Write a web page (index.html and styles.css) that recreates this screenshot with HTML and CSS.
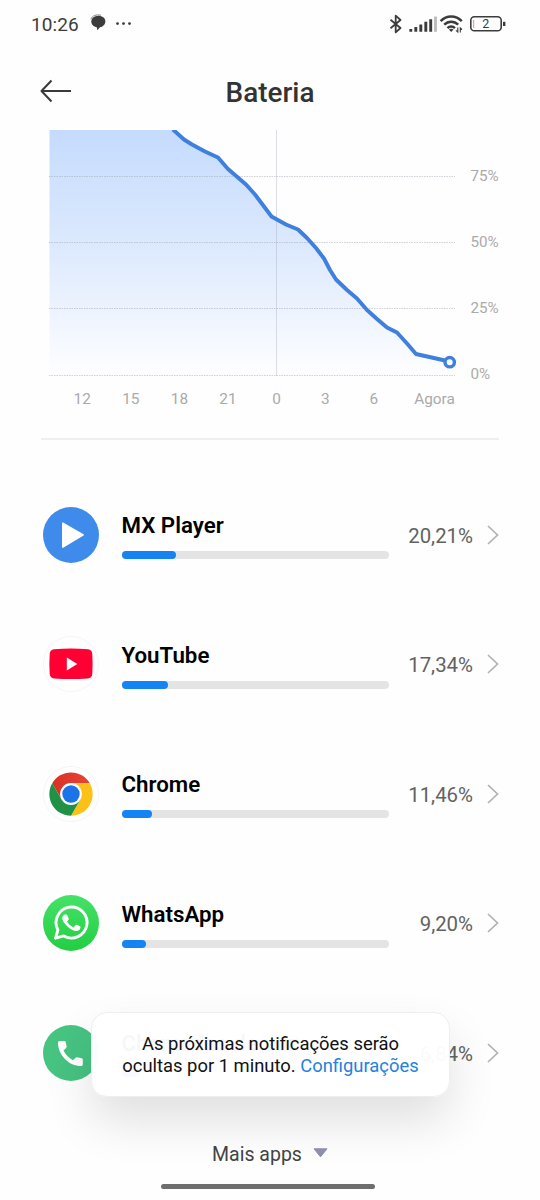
FILE: index.html
```
<!DOCTYPE html>
<html lang="pt-BR">
<head>
<meta charset="utf-8">
<title>Bateria</title>
<link rel="stylesheet" href="styles.css">
</head>
<body>
<div class="screen">
  <div class="status">
    <span class="clock">10:26</span>
    <svg class="notices" width="46" height="20" viewBox="0 0 46 20" fill="#3c3c3c">
      <path d="M2.600 5C5.900 1.800 11.900 2 14.400 5.200C17 9.500 13.900 13.700 10 14.200L7.300 17.300L6.800 14.200C2.400 13.500 -.6 9 2.600 5Z"/>
      <path d="M.9 6.200C2.300 2.600 6 1.300 11 2.200" fill="none" stroke="#777" stroke-width=".9"/>
      <circle cx="27.500" cy="10.600" r="1.400"/><circle cx="33.500" cy="10.600" r="1.400"/><circle cx="39.500" cy="10.600" r="1.400"/>
    </svg>
    <svg class="signals" width="120" height="24" viewBox="0 0 120 24" fill="none" stroke="#3c3c3c">
      <path d="M2.500 7.800L12.500 16L7.700 20.300V3.700L12.500 8L2.500 16.200" stroke-width="1.800" stroke-linejoin="round"/>
      <path d="M22.800 19.800V17M27.800 19.800V15M32.800 19.800V12.500M37.800 19.800V9.800M42.700 19.800V7.300" stroke-width="2.900"/>
      <path d="M47.500 19.800V4.600" stroke="#bdbdbd" stroke-width="2.900"/>
      <g stroke-width="2.400">
        <path d="M52.600 9.200C58.700 2.900 67.700 2.900 73.800 9.200"/>
        <path d="M56.200 12.700C60.200 8.700 66.200 8.700 70.200 12.700"/>
        <path d="M59.500 16.100C61.500 13.900 64.900 13.900 66.900 16.100"/>
      </g>
      <path d="M60.900 17.500Q63.200 15.800 65.500 17.500L63.200 20Z" fill="#3c3c3c" stroke="none"/>
      <path d="M69.800 15.500V20L68 18.400M72.300 20.500V16L74 17.500" stroke-width="1.100"/>
      <rect x="82.800" y="4.800" width="30.400" height="14" rx="3.600" stroke-width="1.600"/>
      <path d="M85.700 8V16" stroke="#d79b98" stroke-width="1.100"/>
      <path d="M116.200 9.800V14" stroke-width="2.400"/>
      <text class="level" x="97.800" y="16.400">2</text>
    </svg>
  </div>

  <header class="header">
    <svg class="back" width="32" height="24" viewBox="0 0 32 24"><path d="M31 12H1.500M11.500 1.500L1.500 12L11.500 22.500"/></svg>
    <h1 class="title">Bateria</h1>
  </header>

  <svg class="chart" width="540" height="308" viewBox="0 130 540 308">
    <defs>
      <linearGradient id="fade" x1="0" y1="130" x2="0" y2="376" gradientUnits="userSpaceOnUse">
        <stop offset="0" stop-color="#c5dbfd"/><stop offset=".5" stop-color="#deeafd"/><stop offset="1" stop-color="#fefeff"/>
      </linearGradient>
    </defs>
    <path fill="url(#fade)" d="M49.500 130H173L184 139.500L192 144.500L205 151.500L218 157.500L228 169L246 184.500L255 194.500L271.500 216.500L286 224.500L298 229.500L307 238L316 248L324 258.500L330 270L336 279.500L347 290L357 298.500L367 310L377 319L387 327.500L397 332.500L407 343.500L416 354L449.500 362V376H49.500Z"/>
    <path class="grid" d="M49 176.500H455M49 242.500H455M49 308.500H455M49 375.500H455"/>
    <path class="midnight" d="M276.500 130V376"/>
    <path class="curve" d="M173 129.500L184 139.500L192 144.500L205 151.500L218 157.500L228 169L246 184.500L255 194.500L271.500 216.500L286 224.500L298 229.500L307 238L316 248L324 258.500L330 270L336 279.500L347 290L357 298.500L367 310L377 319L387 327.500L397 332.500L407 343.500L416 354L449.500 361.500"/>
    <circle class="now" cx="449.700" cy="362.200" r="4.700"/>
    <g class="axis">
      <text x="470.500" y="180.700">75%</text><text x="470.500" y="246.700">50%</text><text x="470.500" y="312.700">25%</text><text x="470.500" y="378.700">0%</text>
    </g>
    <g class="axis axis-hours">
      <text x="82.200" y="403.700">12</text><text x="130.800" y="403.700">15</text><text x="179.400" y="403.700">18</text><text x="228" y="403.700">21</text><text x="276.700" y="403.700">0</text><text x="325.300" y="403.700">3</text><text x="373.900" y="403.700">6</text><text x="434.500" y="403.700">Agora</text>
    </g>
  </svg>
  <div class="divider"></div>

  <div class="apps">
    <div class="app">
      <svg class="icon" viewBox="0 0 56 56"><circle cx="28" cy="28" r="28" fill="#3f8beb"/><path d="M19.800 16.200L40.200 27.800L19.800 40Z" fill="#fff" stroke="#fff" stroke-width="1.500" stroke-linejoin="round"/></svg>
      <div class="usage"><div class="name">MX Player</div><div class="bar"><div class="fill" style="width:20.21%"></div></div></div>
      <span class="percent">20,21%</span><svg class="chevron" viewBox="0 0 12 20"><path d="M1 1L10.500 10L1 19"/></svg>
    </div>
    <div class="app">
      <svg class="icon" viewBox="0 0 56 56"><circle cx="28" cy="28" r="27.500" fill="#fff" stroke="#f4f4f4"/><path d="M11 13.200Q28 12 45 13.200Q49 13.600 49.300 18Q50 28 49.300 38Q49 42 45 42.400Q28 43.600 11 42.400Q7 42 6.700 38Q6 28 6.700 18Q7 13.600 11 13.200Z" fill="#ff0033"/><path d="M23.800 21.600L34.300 28L23.800 34.500Z" fill="#fff"/></svg>
      <div class="usage"><div class="name">YouTube</div><div class="bar"><div class="fill" style="width:17.34%"></div></div></div>
      <span class="percent">17,34%</span><svg class="chevron" viewBox="0 0 12 20"><path d="M1 1L10.500 10L1 19"/></svg>
    </div>
    <div class="app">
      <svg class="icon" viewBox="0 0 56 56"><defs><linearGradient id="red"><stop stop-color="#d93025"/><stop offset="1" stop-color="#e74436"/></linearGradient></defs><circle cx="28" cy="28" r="27.500" fill="#fff" stroke="#f4f4f4"/>
        <path d="M28 28L18.600 33.400L9.200 17.200A21.800 21.800 0 0 1 46.800 17.200H28Z" fill="url(#red)"/>
        <path d="M28 17.200H46.800A21.800 21.800 0 0 1 28 49.800L37.400 33.400Z" fill="#fbc116"/>
        <path d="M9.200 17.200A21.800 21.800 0 0 0 28 49.800L37.400 33.400L28 28L18.600 33.400Z" fill="#219145"/>
        <circle cx="28" cy="28" r="10.900" fill="#fff"/><circle cx="28" cy="28" r="8.700" fill="#1a73e8"/></svg>
      <div class="usage"><div class="name">Chrome</div><div class="bar"><div class="fill" style="width:11.46%"></div></div></div>
      <span class="percent">11,46%</span><svg class="chevron" viewBox="0 0 12 20"><path d="M1 1L10.500 10L1 19"/></svg>
    </div>
    <div class="app">
      <svg class="icon" viewBox="0 0 56 56"><defs><linearGradient id="green" x2="0" y2="1"><stop stop-color="#45e268"/><stop offset="1" stop-color="#23ce42"/></linearGradient></defs><circle cx="28" cy="28" r="28" fill="url(#green)"/>
        <path d="M12.500 43.200L14.900 34.800A15.500 15.500 0 1 1 20.800 40.900Z" fill="none" stroke="#fff" stroke-width="2.900" stroke-linejoin="round"/>
        <path d="M21.700 19.400H23.200Q24 19.400 24.300 20.200L25.700 23.500Q26 24.200 25.500 24.800L24 26.700Q26.200 30.700 30.600 32.400L32.600 30Q33.100 29.400 33.900 29.800L37 31.300Q37.700 31.700 37.500 32.500Q37 35.800 33.300 36Q30 36.200 24.900 31.900Q19 26.400 19.200 23Q19.400 20.600 21.700 19.400Z" fill="#fff"/></svg>
      <div class="usage"><div class="name">WhatsApp</div><div class="bar"><div class="fill" style="width:9.2%"></div></div></div>
      <span class="percent">9,20%</span><svg class="chevron" viewBox="0 0 12 20"><path d="M1 1L10.500 10L1 19"/></svg>
    </div>
    <div class="app">
      <svg class="icon" viewBox="0 0 56 56"><circle cx="28" cy="28" r="28" fill="#47c382"/><path d="M16.500 16H21.500Q22.500 16 22.700 17L23.600 21.500Q23.700 22.300 23.100 22.900L20.500 25.500Q23.800 31.900 29.900 35.200L32.600 32.700Q33.200 32.100 34 32.300L38.800 33.300Q39.800 33.500 39.800 34.500V39.600Q39.800 41 38.300 41C25.800 41 15 30.300 15 17.500Q15 16 16.500 16Z" fill="#fff"/></svg>
      <div class="usage"><div class="name">Chamadas de voz</div><div class="bar"><div class="fill" style="width:6.84%"></div></div></div>
      <span class="percent">6,84%</span><svg class="chevron" viewBox="0 0 12 20"><path d="M1 1L10.500 10L1 19"/></svg>
    </div>
  </div>

  <div class="more"><span>Mais apps</span><svg width="15" height="10" viewBox="0 0 15 10"><path d="M1 .8H14L7.500 8.900Z" fill="#9090b3" stroke="#9090b3" stroke-linejoin="round"/></svg></div>
  <div class="home"></div>

  <div class="toast"><span>As próximas notificações serão</span><span>ocultas por 1 minuto. <a class="link">Configurações</a></span></div>
</div>
</body>
</html>
```
FILE: styles.css
```
* { box-sizing: border-box; }
body { margin: 0; background: #fefefe; font-family: Roboto, "Noto Sans", sans-serif; }
.screen { position: relative; width: 540px; height: 1200px; overflow: hidden; display: flex; flex-direction: column; }
.status { height: 48px; flex: none; display: flex; align-items: center; padding: 0 32px 0 31px; color: #3c3c3c; }
.clock { font-size: 19px; font-weight: 450; line-height: 24px; width: 59px; padding-top: 2px; letter-spacing: .1px; }
.notices { margin-top: -2px; }
.signals { margin-left: auto; }
.level { font: 400 12.5px Roboto, sans-serif; fill: #3c3c3c; stroke: none; text-anchor: middle; }
.header { height: 82px; flex: none; display: grid; grid-template-columns: 80px 1fr 80px; align-items: center; padding: 6px 0 0 0; }
.back { margin-left: 40px; margin-bottom: 2px; fill: none; stroke: #3a3a3a; stroke-width: 2; stroke-linejoin: round; }
.title { margin: 0; padding-top: 2px; font-size: 27.9px; line-height: 34px; font-weight: 470; color: #333; text-align: center; }
.chart { flex: none; display: block; }
.grid { stroke: #9da4ae; stroke-opacity: .5; stroke-width: 1; stroke-dasharray: 1.5 1; }
.midnight { stroke: #9da4b4; stroke-opacity: .35; }
.curve { fill: none; stroke: #3f80df; stroke-width: 3.9; stroke-linejoin: round; }
.now { fill: #fff; stroke: #3f80df; stroke-width: 3.4; }
.axis { font-size: 15.2px; font-weight: 370; fill: #aaa; }
.axis-hours { text-anchor: middle; font-size: 15.4px; }
.divider { flex: none; height: 2px; margin: 0 41px; background: #efefef; }
.apps { flex: none; padding-top: 30px; }
.app { height: 129.5px; display: flex; align-items: center; padding: 0 41px 0 43px; }
.icon { width: 56px; height: 56px; flex: none; }
.usage { width: 267.5px; margin-left: 22.5px; padding-top: 2px; }
.name { font-size: 22.3px; line-height: 26px; font-weight: 600; color: #000; white-space: nowrap; }
.bar { height: 8px; margin-top: 13px; border-radius: 4px; background: #e4e4e4; }
.fill { height: 8px; border-radius: 4px; background: #1484f5; }
.percent { flex: 1; text-align: right; font-size: 20.4px; font-weight: 370; line-height: 26px; color: #626262; padding-top: 1.5px; }
.chevron { width: 12px; height: 20px; margin-left: 14px; fill: none; stroke: #b2b2b2; stroke-width: 1.7; }
.more { flex: none; height: 24px; margin-top: 24.5px; display: flex; align-items: center; justify-content: center; gap: 11px; font-size: 19.5px; color: #444; }
.more svg { margin-bottom: 2px; }
.home { flex: none; width: 214px; height: 5px; margin: 18px 0 0 161px; border-radius: 3px; background: #6e6e6e; }
.toast { position: absolute; left: 91px; top: 1012px; width: 359px; height: 85px; padding-top: 0; border: 1px solid #eee; border-radius: 16px; background: rgba(255,255,255,.97); box-shadow: 0 24px 48px rgba(0,0,0,.12); display: flex; flex-direction: column; justify-content: center; align-items: center; font-size: 18.4px; line-height: 22px; color: #111; white-space: nowrap; }
.link { color: #2381df; }
```
